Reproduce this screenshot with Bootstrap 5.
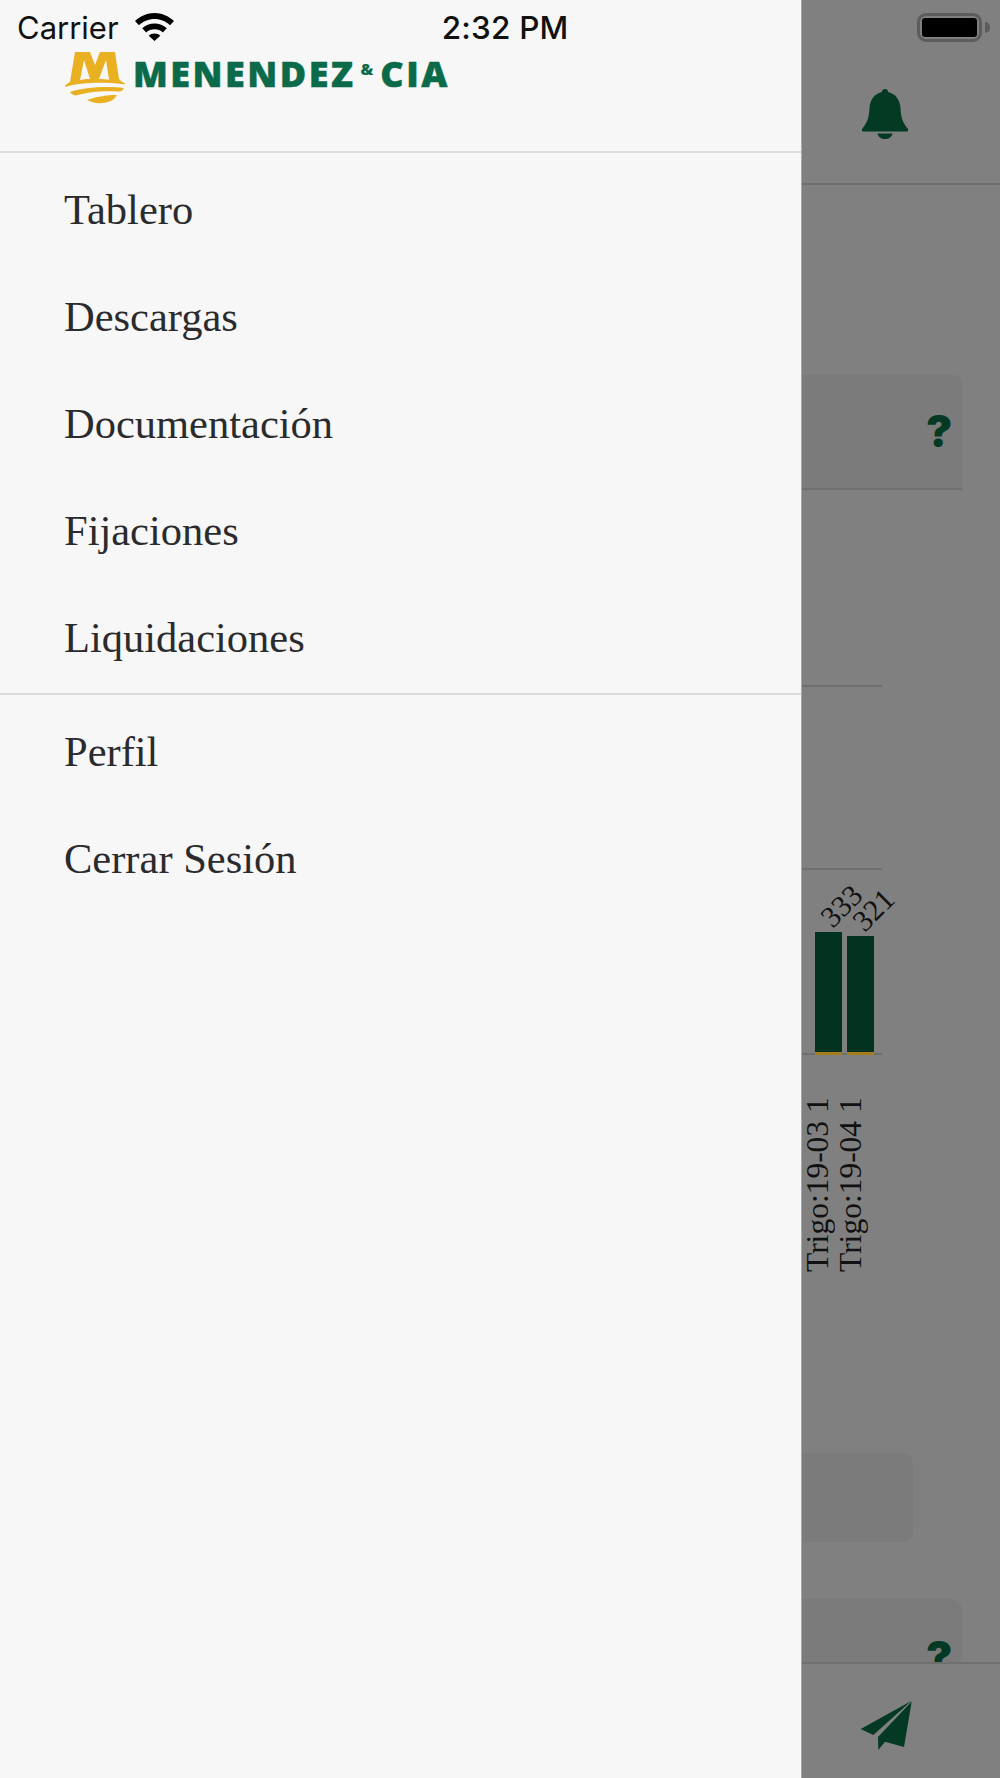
<!DOCTYPE html>
<html lang="es">
<head>
  <meta charset="UTF-8" />
  <meta name="viewport" content="width=device-width, initial-scale=1.0"/>
  <title>Menendez & Cia</title>
  <link href="https://cdn.jsdelivr.net/npm/bootstrap@5.3.0/dist/css/bootstrap.min.css" rel="stylesheet">
  <style>
    html, body { height: 1778px; overflow: hidden; }
    body { background: #808080; }
    .shell { width: 1000px; height: 1778px; }

    /* drawer */
    .drawer { width: 802px; flex: none; background: #f7f7f7; border-right: 1px solid #a9a9a9; }
    .status-row { height: 52px; padding: 10px 0 0 17px; font-family: Inter, "Liberation Sans", sans-serif; font-size: 31px; line-height: 36px; color: #111; }
    .wifi { width: 39px; height: 28px; margin: 3px 0 0 16px; }
    .clock { margin-left: 268px; font-size: 31.5px; font-weight: 500; letter-spacing: .2px; }
    .brand-row { height: 101px; padding-left: 64px; border-bottom: 2px solid #dcdcdc; }
    .brand-mark { width: 62px; height: 52px; }
    .brand-name { margin: -3px 0 0 7px; font-family: "Open Sans", "Liberation Sans", sans-serif; font-weight: 800; font-size: 36px; line-height: 40px; letter-spacing: 2.5px; -webkit-text-stroke: .5px #0b6a4a; color: #0b6a4a; white-space: nowrap; }
    .brand-name span { font-size: 16px; letter-spacing: 0; vertical-align: 12px; margin: 0 7px 0 5px; -webkit-text-stroke: 0; }
    .menu-group { padding: 3px 0 2px; }
    .menu-group + .menu-group { border-top: 2px solid #dcdcdc; padding-top: 3px; }
    .menu-link { height: 107px; display: flex; align-items: center; padding: 0 0 0 64px; font-family: "Liberation Serif", serif; font-size: 42.5px; color: #2b2b2d; }
    .menu-link:hover { color: #2b2b2d; }

    /* page behind the drawer */
    .behind { flex: 1; min-width: 0; overflow: hidden; }
    .behind-head { height: 185px; border-bottom: 2px solid #6f6f6f; flex: none; overflow: hidden; }
    .battery { width: 65px; height: 29px; margin: 13px 0 0 115px; border: 3px solid #5c5c5c; border-radius: 9px; padding: 2px; position: relative; }
    .battery i { display: block; height: 100%; background: #000; border-radius: 3px; }
    .battery::after { content: ""; position: absolute; right: -11px; top: 6px; width: 5px; height: 11px; background: #5c5c5c; border-radius: 0 5px 5px 0; }
    .bell { width: 46px; height: 50px; margin: 47px 0 0 60px; display: block; }
    .behind-body { flex: 1; min-height: 0; overflow: hidden; }
    .help-card { width: 160px; height: 115px; background: #7b7b7b; border-bottom: 2px solid #6f6f6f; border-radius: 0 8px 0 0; margin-top: 190px; padding: 34px 0 0 124px; }
    .help-mark { font-family: Inter, "Liberation Sans", sans-serif; font-weight: 900; font-size: 44px; line-height: 44px; color: #043a24; display: block; }
    .plot { width: 80px; height: 370px; margin-top: 195px; border-top: 2px solid #6f6f6f; border-bottom: 2px solid #6f6f6f; position: relative; }
    .plot-mid { height: 183px; border-bottom: 2px solid #6f6f6f; }
    .bars { position: absolute; left: 13px; bottom: -2px; gap: 5px; }
    .bar-col { width: 27px; position: relative; }
    .bar-fill { background: #023220; border-bottom: 3px solid #a67c1c; }
    .bar-value { position: absolute; left: 4px; top: -41px; font-family: "Liberation Serif", serif; font-size: 30px; line-height: 30px; color: #111; transform: rotate(-45deg); }
    .bar-labels { gap: 8px; margin: 39px 0 0 3px; height: 178px; }
    .bar-label { writing-mode: vertical-rl; transform: rotate(180deg); font-family: "Liberation Serif", serif; font-size: 31.5px; line-height: 25px; color: #111; white-space: nowrap; width: 25px; }
    .blank-card { width: 111px; height: 89px; background: #7b7b7b; border-radius: 0 10px 10px 0; margin-top: 181px; }
    .help-card-low { width: 160px; height: 200px; background: #7b7b7b; border-radius: 0 10px 0 0; margin-top: 57px; padding: 36px 0 0 124px; }
    .behind-foot { height: 116px; flex: none; border-top: 2px solid #6f6f6f; background: #808080; }
    .plane { width: 54px; height: 54px; margin: 34px 0 0 56px; display: block; }
  </style>
</head>
<body>

  <div class="shell d-flex">

    <!-- Drawer -->
    <div class="drawer d-flex flex-column">
      <div class="status-row d-flex align-items-start">
        <span>Carrier</span>
        <svg class="wifi" viewBox="0 0 39 28"><path d="M19.500 0C12 0 5.400 3 0 8l4 4.200C8 8.400 13.500 6 19.500 6S31 8.400 35 12.200L39 8C33.600 3 27 0 19.500 0z"/><path d="M19.500 10.500c-4.800 0-9 1.800-12.300 4.800l4 4.200c2.200-2 5-3.200 8.300-3.200s6.100 1.200 8.300 3.200l4-4.200c-3.300-3-7.500-4.800-12.300-4.800z"/><path d="M19.500 20.500c-2.400 0-4.300.8-5.800 2.200l5.800 5.300 5.800-5.300c-1.500-1.400-3.400-2.200-5.800-2.200z"/></svg>
        <span class="clock">2:32 PM</span>
      </div>

      <div class="brand-row d-flex align-items-start">
        <svg class="brand-mark" viewBox="0 0 62 52">
          <path fill="#e9b021" fill-rule="evenodd" d="M11 0h15l5 13 5-13h15l4 27c2 2.500 4 3.500 6 4.500v1C45 30 17 30 1 35c0-2 2-3.500 5-5z M20 8l-4 20c4-.6 7-.8 10-.9z M42 8l-7 19c4 .1 7 .4 10 .8z"/>
          <path fill="#e9b021" d="M6 40c14-5 38-6 54-4-1 2-2 3-4 3.500-16-1-32 0-44 4-3-.5-5-2-6-3.500z"/>
          <path fill="#e9b021" d="M23 48c8-3 19-5 30-5-2 4-6 6.500-11 7.500-7 1.500-14 .5-19-2.500z"/>
        </svg>
        <div class="brand-name">MENENDEZ<span>&amp;</span>CIA</div>
      </div>

      <nav class="nav flex-column">
        <div class="menu-group w-100">
          <a class="nav-link menu-link" href="#">Tablero</a>
          <a class="nav-link menu-link" href="#">Descargas</a>
          <a class="nav-link menu-link" href="#">Documentación</a>
          <a class="nav-link menu-link" href="#">Fijaciones</a>
          <a class="nav-link menu-link" href="#">Liquidaciones</a>
        </div>
        <div class="menu-group w-100">
          <a class="nav-link menu-link" href="#">Perfil</a>
          <a class="nav-link menu-link" href="#">Cerrar Sesión</a>
        </div>
      </nav>
    </div>

    <!-- Dimmed page behind the drawer -->
    <div class="behind d-flex flex-column">
      <div class="behind-head">
        <div class="battery"><i></i></div>
        <svg class="bell" viewBox="0 0 46 50"><path fill="#043a24" d="M23 0c1.800 0 3 1.200 3.200 3C34 5 38 11 38.500 19c.5 8 1 13 7.500 21 .5 1 0 2.500-1.500 2.500h-43C0 42.500-.5 41 0 40c6.500-8 7-13 7.500-21C8 11 12 5 19.800 3 20 1.200 21.200 0 23 0z"/><path fill="#043a24" d="M15.500 44.500h15c-.5 3.500-3.700 5.500-7.500 5.500s-7-2-7.500-5.500z"/></svg>
      </div>

      <div class="behind-body">
        <div class="help-card"><span class="help-mark">?</span></div>

        <div class="plot">
          <div class="plot-mid"></div>
          <div class="bars d-flex align-items-end">
            <div class="bar-col">
              <span class="bar-value">333</span>
              <div class="bar-fill" style="height: 123px"></div>
            </div>
            <div class="bar-col">
              <span class="bar-value">321</span>
              <div class="bar-fill" style="height: 119px"></div>
            </div>
          </div>
        </div>
        <div class="bar-labels d-flex">
          <div class="bar-label">Trigo:19-03 1</div>
          <div class="bar-label">Trigo:19-04 1</div>
        </div>

        <div class="blank-card"></div>
        <div class="help-card-low"><span class="help-mark">?</span></div>
      </div>

      <div class="behind-foot">
        <svg class="plane" viewBox="0 0 54 54"><path fill="#043a24" d="M53.700 2.700 2.700 31 15.300 37 51 5z"/><path fill="#043a24" d="M53.700 3.500 20 39 20.300 52 27 43.700 46 49z"/></svg>
      </div>
    </div>

  </div>

  <script src="https://cdn.jsdelivr.net/npm/bootstrap@5.3.0/dist/js/bootstrap.bundle.min.js"></script>
</body>
</html>
